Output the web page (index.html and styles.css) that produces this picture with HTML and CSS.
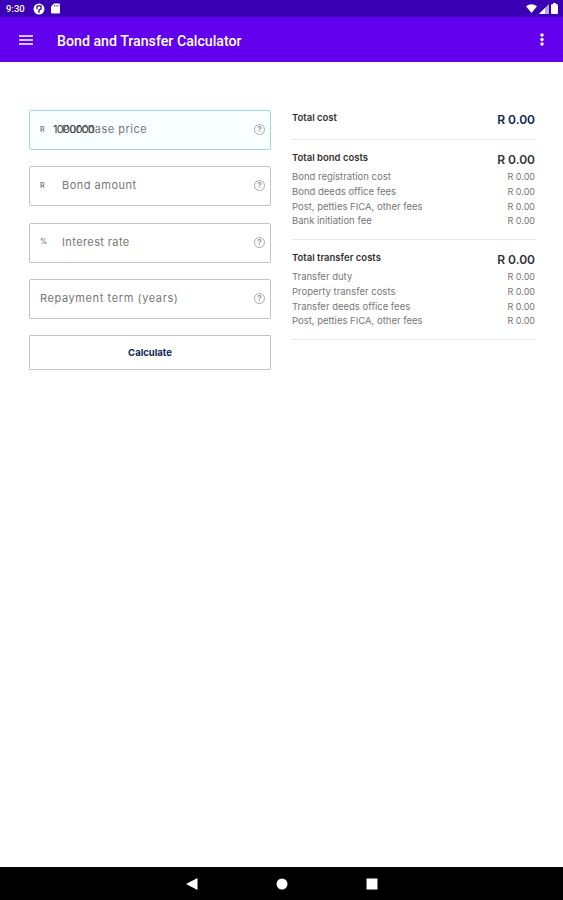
FILE: index.html
```html
<!DOCTYPE html>
<html lang="en">
<head>
  <meta charset="UTF-8" />
  <meta name="viewport" content="width=device-width, initial-scale=1.0" />
  <title>Bond and Transfer Calculator</title>
  <link rel="stylesheet" href="styles.css">
</head>
<body>
  <!-- Status bar -->
  <div class="status-bar">
    <span class="time">9:30</span>
    <svg class="status-app" width="12" height="12" viewBox="0 0 12 12"><circle cx="6" cy="6" r="5.5" fill="#fff"/><path d="M4 2.8h4v3L6 7.2v2.6M4 3v3" fill="none" stroke="#3a00b3" stroke-width="1.3"/></svg>
    <svg class="status-card" width="9" height="11" viewBox="0 0 9 11"><path d="M3 .5h5q1 0 1 1v8q0 1-1 1H1q-1 0-1-1V3.5z" fill="#fff"/><path d="M3.5 2v1.6M5.2 2v1.6M7 2v1.6" stroke="#3a00b3" stroke-width=".7"/></svg>
    <div class="status-right">
      <svg width="11" height="9" viewBox="0 0 11 9"><path d="M0 2.2Q5.500-1.700 11 2.200L5.500 9z" fill="#fff"/></svg>
      <svg width="10" height="10" viewBox="0 0 10 10"><path d="M10 0v10H0z" fill="#fff" opacity=".65"/><path d="M6 4v6H0z" fill="#fff"/></svg>
      <svg width="7" height="11" viewBox="0 0 7 11"><path d="M2 0h3v1.200h1.200q.8 0 .8.8v8q0 1-1 1H1q-1 0-1-1V2q0-.8.8-.8H2z" fill="#fff"/></svg>
    </div>
  </div>

  <!-- App bar -->
  <header class="app-bar">
    <svg class="menu" width="14" height="10" viewBox="0 0 14 10"><path d="M0 1h14M0 5h14M0 9h14" stroke="#fff" stroke-width="1.500"/></svg>
    <h1 class="title">Bond and Transfer Calculator</h1>
    <svg class="more" width="4" height="13" viewBox="0 0 4 13"><g fill="#fff"><circle cx="2" cy="2" r="1.700"/><circle cx="2" cy="6.500" r="1.700"/><circle cx="2" cy="11" r="1.700"/></g></svg>
  </header>

  <main class="content">
    <form class="form">
      <div class="field active">
        <span class="prefix">R</span>
        <span class="label purchase">Purchase price</span>
        <span class="value">1000000</span>
        <span class="help">?</span>
      </div>
      <div class="field">
        <span class="prefix">R</span>
        <span class="label bond">Bond amount</span>
        <span class="help">?</span>
      </div>
      <div class="field">
        <span class="prefix">%</span>
        <span class="label rate">Interest rate</span>
        <span class="help">?</span>
      </div>
      <div class="field">
        <span class="label term">Repayment term (years)</span>
        <span class="help">?</span>
      </div>
      <button type="button" class="button">Calculate</button>
    </form>

    <div class="results">
      <section class="group total">
        <div class="head"><h2>Total cost</h2><strong>R 0.00</strong></div>
      </section>
      <section class="group">
        <div class="head"><h2>Total bond costs</h2><strong>R 0.00</strong></div>
        <div class="row"><span>Bond registration cost</span><span class="amount">R 0.00</span></div>
        <div class="row"><span>Bond deeds office fees</span><span class="amount">R 0.00</span></div>
        <div class="row"><span>Post, petties FICA, other fees</span><span class="amount">R 0.00</span></div>
        <div class="row"><span>Bank initiation fee</span><span class="amount">R 0.00</span></div>
      </section>
      <section class="group">
        <div class="head"><h2>Total transfer costs</h2><strong>R 0.00</strong></div>
        <div class="row"><span>Transfer duty</span><span class="amount">R 0.00</span></div>
        <div class="row"><span>Property transfer costs</span><span class="amount">R 0.00</span></div>
        <div class="row"><span>Transfer deeds office fees</span><span class="amount">R 0.00</span></div>
        <div class="row"><span>Post, petties FICA, other fees</span><span class="amount">R 0.00</span></div>
      </section>
    </div>
  </main>

  <!-- Navigation bar -->
  <nav class="nav-bar">
    <svg width="12" height="12" viewBox="0 0 12 12"><path d="M11.500 0v12L0 6z" fill="#fff"/></svg>
    <svg width="12" height="12" viewBox="0 0 12 12"><circle cx="6" cy="6" r="5.500" fill="#fff"/></svg>
    <svg width="12" height="12" viewBox="0 0 12 12"><path d="M.5.500h11v11H.5z" fill="#fff"/></svg>
  </nav>
</body>
</html>
```

FILE: styles.css
```css
* {
  box-sizing: border-box;
}

body {
  margin: 0;
  height: 100vh;
  display: flex;
  flex-direction: column;
  background: #fff;
  color: #777;
  font-family: Inter, sans-serif;
}

svg {
  display: block;
  flex-shrink: 0;
}

.status-bar {
  height: 17px;
  display: flex;
  align-items: center;
  padding: 0 5px 0 6px;
  background: #3a00b3;
  color: #fff;
}

.time {
  width: 20px;
  font: 500 9.5px Roboto, sans-serif;
}

.status-app {
  margin-left: 7px;
}

.status-card {
  margin-left: 6px;
}

.status-right {
  display: flex;
  align-items: center;
  gap: 2px;
  margin-left: auto;
}

.app-bar {
  height: 45px;
  display: flex;
  align-items: center;
  padding: 0 19px;
  background: #6200ee;
  color: #fff;
}

.title {
  margin: 2px 0 0 24px;
  font: 500 14.2px Roboto, sans-serif;
}

.more {
  margin-left: auto;
}

.content {
  flex: 1;
  display: grid;
  grid-template-columns: 242px 243px;
  column-gap: 21px;
  align-items: start;
  padding: 48px 0 0 29px;
}

.form {
  display: flex;
  flex-direction: column;
  gap: 16.3px;
}

.field {
  position: relative;
  height: 40px;
  display: flex;
  align-items: center;
  padding: 0 5px 2px 10px;
  border: 1px solid #c4c4c4;
  border-radius: 2px;
  font-size: 11px;
}

.field.active {
  border-color: #9edbd5;
  background: #f8fffe;
}

.prefix {
  width: 22px;
  font-size: 7px;
  font-weight: 600;
}

.purchase {
  letter-spacing: 0.5px;
}

.bond {
  letter-spacing: 0.5px;
}

.rate {
  letter-spacing: 0.4px;
}

.term {
  letter-spacing: 0.6px;
}

/* the typed value sits on top of the label */
.value {
  position: absolute;
  left: 23px;
  color: #444;
  letter-spacing: -0.7px;
}

.help {
  width: 11px;
  height: 11px;
  margin: 1px 0 0 auto;
  border: 1.5px solid #aaa;
  border-radius: 50%;
  color: #999;
  font-size: 8px;
  font-weight: 700;
  line-height: 8px;
  text-align: center;
}

.button {
  height: 35px;
  padding: 0;
  border: 1px solid #c4c4c4;
  border-radius: 1px;
  background: #fff;
  color: #0d2357;
  font: 700 9.5px Inter, sans-serif;
}

.group {
  height: 100px;
  padding-top: 10px;
  border-bottom: 1px solid #e8e8e8;
}

.group.total {
  height: 30px;
  padding-top: 0;
}

.head {
  height: 19px;
  display: flex;
  justify-content: space-between;
  color: #333;
}

.head h2 {
  margin: 0;
  font-size: 9.5px;
  font-weight: 600;
  line-height: 15px;
}

.head strong {
  font-size: 12px;
  font-weight: 600;
  line-height: 19px;
}

.total strong {
  color: #0d2357;
}

.row {
  height: 14.8px;
  display: flex;
  justify-content: space-between;
  font-size: 9.5px;
  line-height: 15px;
}

.amount {
  font-size: 9px;
}

.nav-bar {
  height: 33px;
  display: flex;
  align-items: center;
  justify-content: center;
  gap: 78px;
  background: #000;
}
```
